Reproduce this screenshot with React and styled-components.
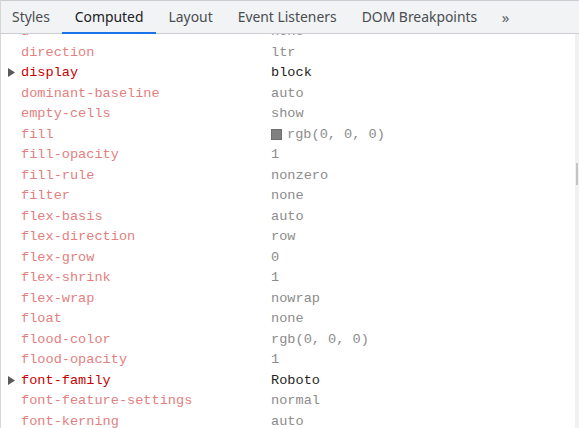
import React from "react";
import styled, { createGlobalStyle } from "styled-components";

const GlobalStyle = createGlobalStyle`
  html, body {
    margin: 0;
    padding: 0;
    background: #ffffff;
    overflow: hidden;
  }
`;

const TABS = ["Styles", "Computed", "Layout", "Event Listeners", "DOM Breakpoints"];

const PROPS = [
  { name: "d", value: "none" },
  { name: "direction", value: "ltr" },
  { name: "display", value: "block", active: true },
  { name: "dominant-baseline", value: "auto" },
  { name: "empty-cells", value: "show" },
  { name: "fill", value: "rgb(0, 0, 0)", swatch: "#808080" },
  { name: "fill-opacity", value: "1" },
  { name: "fill-rule", value: "nonzero" },
  { name: "filter", value: "none" },
  { name: "flex-basis", value: "auto" },
  { name: "flex-direction", value: "row" },
  { name: "flex-grow", value: "0" },
  { name: "flex-shrink", value: "1" },
  { name: "flex-wrap", value: "nowrap" },
  { name: "float", value: "none" },
  { name: "flood-color", value: "rgb(0, 0, 0)" },
  { name: "flood-opacity", value: "1" },
  { name: "font-family", value: "Roboto", active: true },
  { name: "font-feature-settings", value: "normal" },
  { name: "font-kerning", value: "auto" },
  { name: "font-optical-sizing", value: "auto" },
];

const Panel = styled.div`
  width: 579px;
  height: 428px;
  display: flex;
  flex-direction: column;
  border-left: 1px solid #d6d6d6;
  box-sizing: border-box;
  overflow: hidden;
`;

const TabBar = styled.div`
  height: 34px;
  flex: none;
  display: flex;
  align-items: stretch;
  background: #f1f3f4;
  border-top: 1px solid #cbcdd1;
  border-bottom: 1px solid #cbcdd1;
  box-sizing: border-box;
  font-family: "Noto Sans", "Open Sans", sans-serif;
  font-size: 13.9px;
  color: #3c4043;
`;

const Tab = styled.div`
  display: flex;
  align-items: center;
  padding: 0 12.5px;
  margin-bottom: -1px;
  border-bottom: 2px solid ${(p) => (p.$selected ? "#1a73e8" : "transparent")};
  color: ${(p) => (p.$selected ? "#202124" : "#4a4d51")};
  white-space: nowrap;
  &:first-child {
    padding-left: 11px;
  }
`;

const More = styled.div`
  display: flex;
  align-items: center;
  padding: 0 12px;
  color: #5f6368;
  font-size: 15px;
  letter-spacing: -1.5px;
`;

const Body = styled.div`
  flex: 1;
  display: flex;
  min-height: 0;
  overflow: hidden;
`;

const List = styled.div`
  flex: 1;
  margin-top: -12.75px;
  font-family: "Liberation Mono", "DejaVu Sans Mono", monospace;
  font-size: 13.6px;
`;

const Row = styled.div`
  height: 20.5px;
  display: grid;
  grid-template-columns: 20px 250px 1fr;
  align-items: center;
  white-space: nowrap;
`;

const Arrow = styled.span`
  display: flex;
  justify-content: flex-end;
  padding-right: 6px;
  svg {
    display: block;
  }
`;

const Name = styled.span`
  color: ${(p) => (p.$active ? "#c80000" : "#e37f7f")};
`;

const Value = styled.span`
  display: flex;
  align-items: center;
  color: ${(p) => (p.$active ? "#1f1f1f" : "#8c8c8c")};
`;

const Swatch = styled.span`
  width: 9px;
  height: 9px;
  margin-right: 5px;
  background: ${(p) => p.$color};
  border: 1px solid #6e6e6e;
`;

const ScrollTrack = styled.div`
  width: 4px;
  flex: none;
  background: #f1f1f1;
  display: flex;
  flex-direction: column;
  align-items: flex-end;
  padding-top: 129px;
`;

const Thumb = styled.div`
  width: 2px;
  height: 22px;
  margin-right: 1px;
  background: #c4c4c4;
`;

export default function App() {
  return (
    <>
      <GlobalStyle />
      <Panel>
        <TabBar>
          {TABS.map((t) => (
            <Tab key={t} $selected={t === "Computed"}>
              {t}
            </Tab>
          ))}
          <More>»</More>
        </TabBar>
        <Body>
          <List>
            {PROPS.map((p) => (
              <Row key={p.name}>
                <Arrow>
                  {p.active && (
                    <svg width="7" height="9" viewBox="0 0 7 9">
                      <path d="M0 0 L7 4.5 L0 9 Z" fill="#5a5a5a" />
                    </svg>
                  )}
                </Arrow>
                <Name $active={p.active}>{p.name}</Name>
                <Value $active={p.active}>
                  {p.swatch && <Swatch $color={p.swatch} />}
                  {p.value}
                </Value>
              </Row>
            ))}
          </List>
          <ScrollTrack>
            <Thumb />
          </ScrollTrack>
        </Body>
      </Panel>
    </>
  );
}
